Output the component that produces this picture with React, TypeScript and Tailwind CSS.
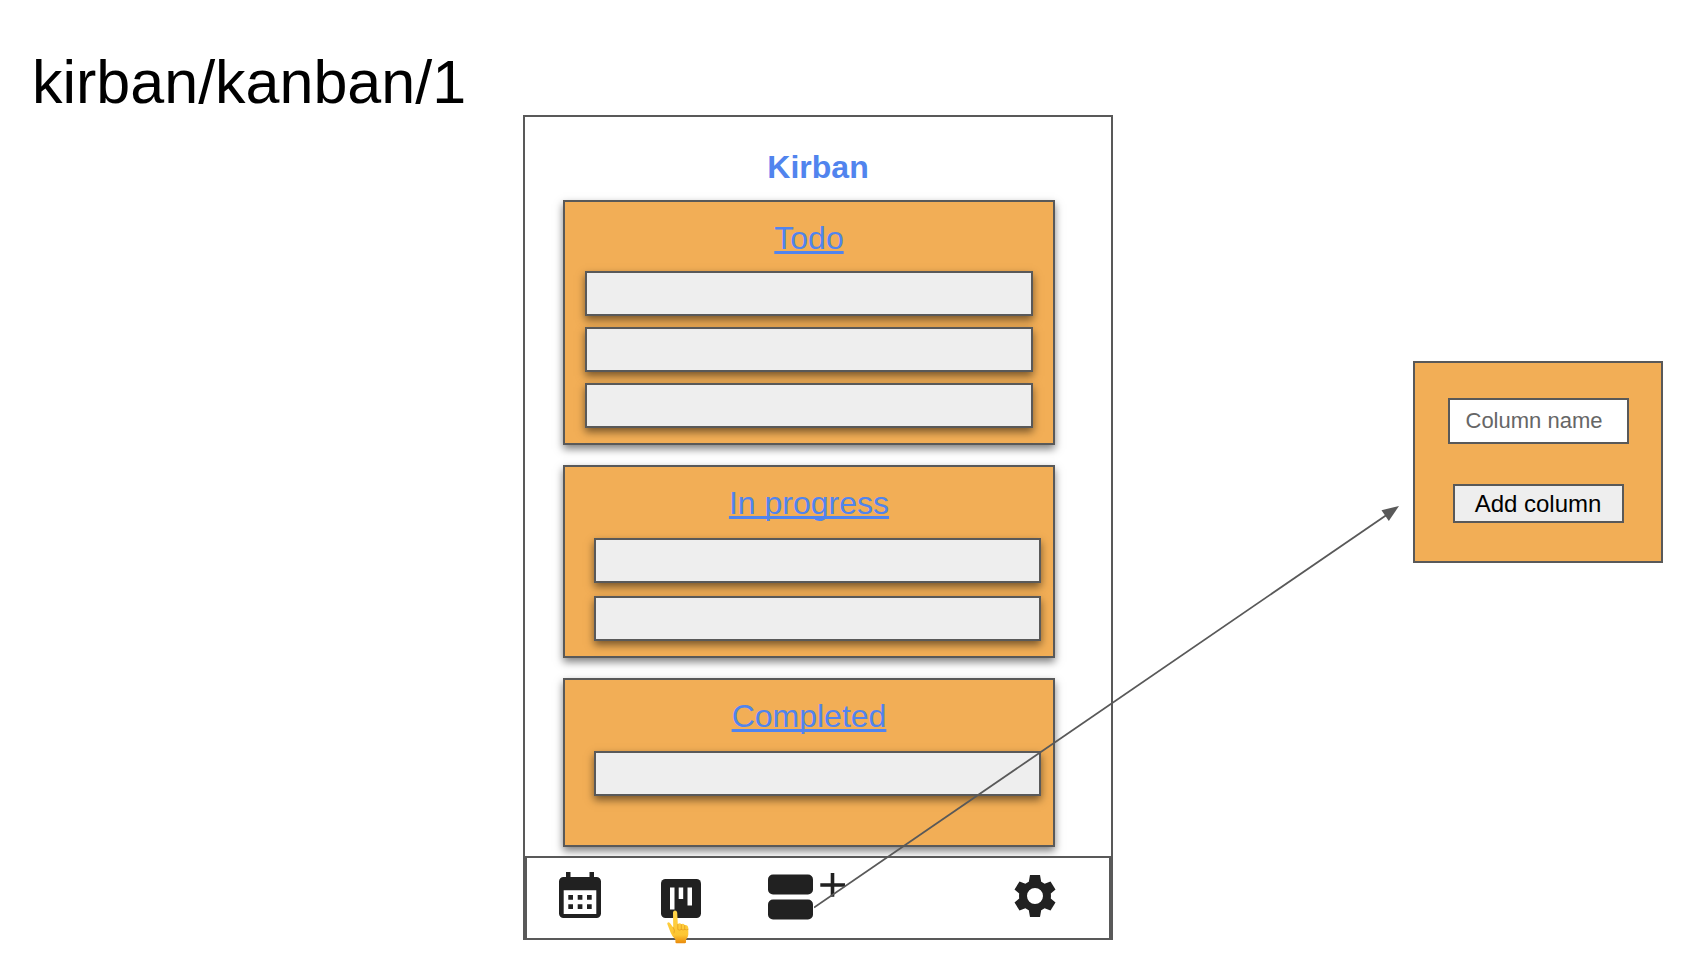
import React from "react";

type Column = { name: string; cards: string; list: string; box: string };

const columns: Column[] = [
  { name: "Todo", cards: "abc", list: "px-5 pt-[13px] gap-[11px]", box: "h-[245px]" },
  { name: "In progress", cards: "ab", list: "pl-[29px] pr-3 pt-[15px] gap-[13px]", box: "h-[193px]" },
  { name: "Completed", cards: "a", list: "pl-[29px] pr-3 pt-[15px]", box: "h-[169px]" },
];

const shadow = "shadow-[0_4px_8px_rgba(0,0,0,0.5)]";

function ColumnBox({ column }: { column: Column }) {
  return (
    <section className={`border-2 border-[#595959] bg-[#f2ae56] pt-4 ${column.box} ${shadow}`}>
      <h2 className="text-center text-[32px] leading-[40px]">
        <a
          href="#column"
          className="text-[#5184ee] underline decoration-[3px] underline-offset-2 [text-decoration-skip-ink:none]"
        >
          {column.name}
        </a>
      </h2>
      <ul className={`flex flex-col ${column.list}`}>
        {column.cards.split("").map((id) => (
          <li key={id} className={`h-[45px] border-2 border-[#595959] bg-[#eeeeee] ${shadow}`} />
        ))}
      </ul>
    </section>
  );
}

function CalendarIcon() {
  return (
    <svg width="42" height="46" viewBox="0 0 42 46" fill="#212121" aria-hidden="true">
      <path d="M7 0h4.500v5h19V0h4.500v5h2.500a4.500 4.500 0 0 1 4.500 4.500v32a4.500 4.500 0 0 1-4.500 4.500h-33a4.500 4.500 0 0 1-4.500-4.500v-32a4.500 4.500 0 0 1 4.500-4.500H7z" />
      <path fill="#fff" d="M4.700 18.300h32.600v23.700H4.700z" />
      <path d="M9.300 23h4.700v4.700H9.300zM18.700 23h4.700v4.700h-4.700zM28 23h4.700v4.700H28zM9.300 32.300h4.700V37H9.300zM18.700 32.300h4.700V37h-4.700zM28 32.300h4.700V37H28z" />
    </svg>
  );
}

function BoardIcon() {
  return (
    <svg width="40" height="39" viewBox="0 0 40 39" aria-hidden="true">
      <rect width="40" height="39" rx="4.500" fill="#212121" />
      <path fill="#fff" d="M9 8.500h4.500v22H9zM17.700 8.500h4.500V20h-4.500zM26.500 8.500H31v18h-4.500z" />
    </svg>
  );
}

function HandIcon() {
  return (
    <svg width="22" height="34" viewBox="0 0 22 34" aria-hidden="true">
      <defs>
        <linearGradient id="skin" x1="0" y1="0" x2="0" y2="1">
          <stop offset="0" stopColor="#ffd54a" />
          <stop offset="0.750" stopColor="#fdc632" />
          <stop offset="1" stopColor="#e98a0c" />
        </linearGradient>
      </defs>
      <path
        fill="url(#skin)"
        d="M6 2.500Q6.200.5 8 .5t2.200 2L10.800 14q2-1.600 3.600.2 2-1 3.300.8 3.300-.3 3.600 3.300v6.500q-.3 3-2.300 4.900v2.500q0 1-1.200 1H9.600q-1.200 0-1.200-1.200v-2.600Q5 26.500 3.600 22.500L.4 14.300q-.5-1.900 1-2.100 1.400 0 2.300 1.800l2.500 3.500z"
      />
      <path
        fill="none"
        stroke="#e39a1c"
        strokeWidth="0.700"
        strokeLinecap="round"
        d="M10.800 14.500v5q1.800 1.200 3.500 0v-5M14.300 19.500q2 1 3.400 0v-4M17.700 19.500q2 .8 3.300 0M6.300 17.500q2 2.500.8 5.500"
      />
    </svg>
  );
}

function AddColumnIcon() {
  return (
    <svg width="77" height="47" viewBox="0 0 77 47" fill="#212121" aria-hidden="true">
      <rect y="1.500" width="45" height="20" rx="5" />
      <rect y="26.500" width="45" height="20" rx="5" />
      <path d="M62.700 0h3.600v10.200H77v3.600H66.300v10h-3.600v-10H52.300v-3.600h10.400z" />
    </svg>
  );
}

function GearIcon() {
  return (
    <svg width="42" height="42" viewBox="0 0 42 42" fill="#212121" fillRule="evenodd" aria-hidden="true">
      <path d="M16 0h10l1.200 6.800q1.900.8 3.400 2l5.900-2.300L41.500 14.500l-4.700 4q.3 2.500 0 5l4.700 4-5 8-5.900-2.300q-1.500 1.200-3.400 2L26 42H16l-1.200-6.800q-1.900-.8-3.400-2l-5.900 2.300-5-8 4.700-4q-.3-2.500 0-5l-4.700-4 5-8 5.900 2.300q1.500-1.200 3.400-2zM21 13a8 8 0 1 0 0 16 8 8 0 1 0 0-16z" />
    </svg>
  );
}

function FlowArrow() {
  return (
    <svg
      className="pointer-events-none absolute bottom-[29px] left-[289px]"
      width="586"
      height="404"
      viewBox="0 0 586 404"
      aria-hidden="true"
    >
      <path d="M0 402.500L574 9" fill="none" stroke="#595959" strokeWidth="1.800" />
      <path d="M585 1L567.500 5.200 574.800 16z" fill="#595959" />
    </svg>
  );
}

export default function App() {
  return (
    <div className="min-h-screen bg-white font-['Liberation_Sans',Arial,sans-serif] text-black">
      <h1 className="px-8 pt-[50px] text-[61px] leading-[65px]">kirban/kanban/1</h1>
      <div className="grid grid-cols-[523fr_590px_569fr] items-start">
        <main className="relative col-start-2 border-2 border-[#595959]">
          <div className="pr-14 pl-[38px] pt-[31px]">
            <p className="pl-[18px] text-center text-[32px] leading-[38px] font-bold text-[#5184ee]">Kirban</p>
            <div className="flex flex-col gap-5 pt-[14px]">
              {columns.map((column) => (
                <ColumnBox key={column.name} column={column} />
              ))}
            </div>
          </div>
          <nav className="relative mt-[9px] flex h-[82px] items-center border-2 border-b-0 border-[#595959] bg-white pr-[53px] pl-8">
            <a href="#calendar" aria-label="Calendar" className="mb-1.5">
              <CalendarIcon />
            </a>
            <a href="#board" aria-label="Board" className="relative ml-[60px]">
              <BoardIcon />
              <span className="absolute top-[31px] left-[6px]">
                <HandIcon />
              </span>
            </a>
            <a href="#add" aria-label="Add column" className="ml-[67px] mb-1">
              <AddColumnIcon />
            </a>
            <a href="#settings" aria-label="Settings" className="ml-auto mb-1">
              <GearIcon />
            </a>
          </nav>
          <FlowArrow />
        </main>
        <form
          onSubmit={(e) => e.preventDefault()}
          className="mt-[246px] mr-[19px] flex w-[250px] flex-col items-center gap-10 justify-self-end border-2 border-[#595959] bg-[#f2ae56] pt-[35px] pb-[38px]"
        >
          <input
            aria-label="Column name"
            placeholder="Column name"
            className="h-[46px] w-[181px] border-2 border-[#595959] bg-white px-4 text-[22px] text-black placeholder:text-[#666666] placeholder:opacity-100"
          />
          <button type="submit" className="h-[39px] w-[171px] border-2 border-[#595959] bg-[#eeeeee] text-2xl leading-none">
            Add column
          </button>
        </form>
      </div>
    </div>
  );
}
